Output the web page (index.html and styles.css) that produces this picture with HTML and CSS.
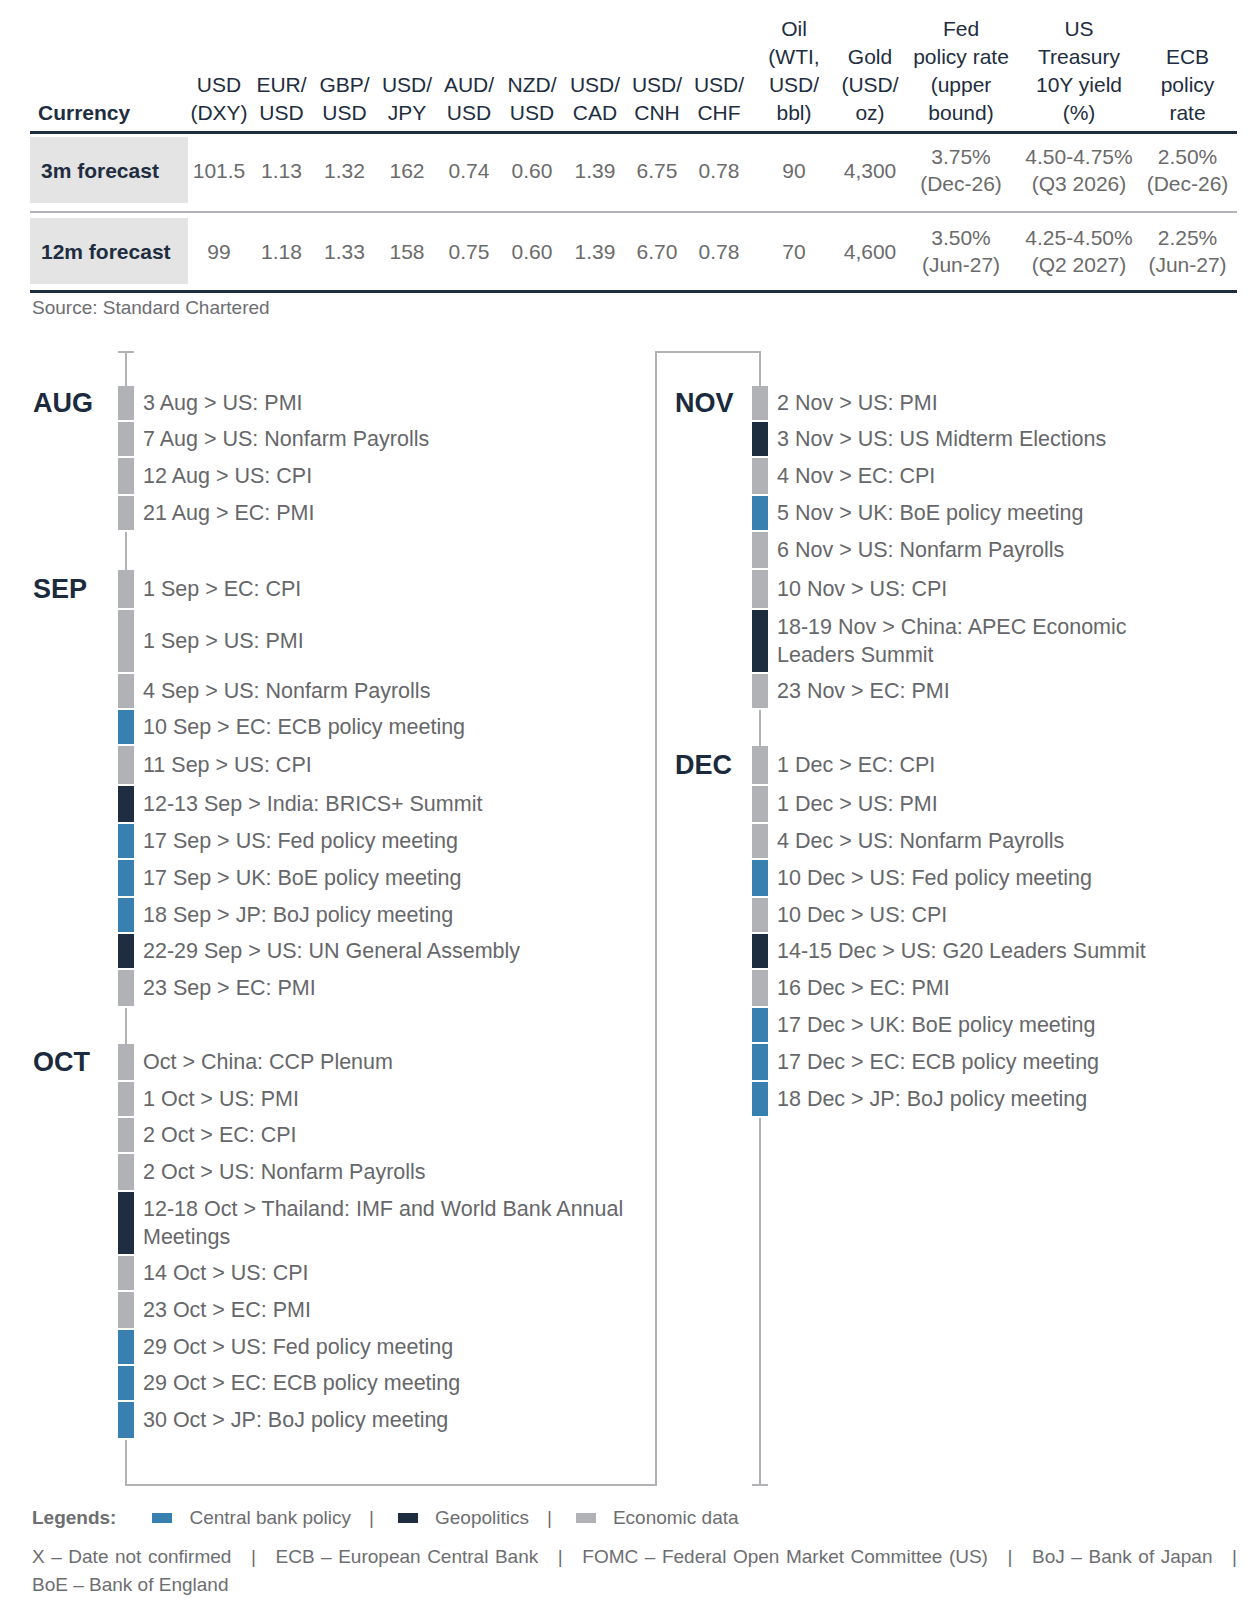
FILE: index.html
```html
<!DOCTYPE html>
<html lang="en">
<head>
<meta charset="utf-8">
<title>FX forecasts and event calendar</title>
<link rel="stylesheet" href="styles.css">
</head>
<body>
<div class="page">
  <table class="fx">
    <colgroup>
      <col class="w158"><col class="w62"><col class="w63"><col class="w63"><col class="w62"><col class="w62"><col class="w64"><col class="w62"><col class="w62"><col class="w62"><col class="w88"><col class="w64"><col class="w118"><col class="w118"><col class="w99">
    </colgroup>
    <thead>
      <tr>
        <th class="cur">Currency</th>
        <th>USD<br>(DXY)</th>
        <th>EUR/<br>USD</th>
        <th>GBP/<br>USD</th>
        <th>USD/<br>JPY</th>
        <th>AUD/<br>USD</th>
        <th>NZD/<br>USD</th>
        <th>USD/<br>CAD</th>
        <th>USD/<br>CNH</th>
        <th>USD/<br>CHF</th>
        <th>Oil<br>(WTI,<br>USD/<br>bbl)</th>
        <th>Gold<br>(USD/<br>oz)</th>
        <th>Fed<br>policy rate<br>(upper<br>bound)</th>
        <th>US<br>Treasury<br>10Y yield<br>(%)</th>
        <th>ECB<br>policy<br>rate</th>
      </tr>
    </thead>
    <tbody>
      <tr class="r1">
        <td class="lab"><div class="lab-box">3m forecast</div></td>
        <td>101.5</td><td>1.13</td><td>1.32</td><td>162</td><td>0.74</td><td>0.60</td><td>1.39</td><td>6.75</td><td>0.78</td><td>90</td><td>4,300</td>
        <td>3.75%<br>(Dec-26)</td><td>4.50-4.75%<br>(Q3 2026)</td><td>2.50%<br>(Dec-26)</td>
      </tr>
      <tr class="r2">
        <td class="lab"><div class="lab-box">12m forecast</div></td>
        <td>99</td><td>1.18</td><td>1.33</td><td>158</td><td>0.75</td><td>0.60</td><td>1.39</td><td>6.70</td><td>0.78</td><td>70</td><td>4,600</td>
        <td>3.50%<br>(Jun-27)</td><td>4.25-4.50%<br>(Q2 2027)</td><td>2.25%<br>(Jun-27)</td>
      </tr>
    </tbody>
  </table>
  <p class="src">Source: Standard Chartered</p>

  <div class="cal">
    <!-- row 0 -->
    <div class="mon"></div><div class="cap-top"></div><div class="txt l"></div>
    <div class="corner"></div><div class="corner-bar"></div><div class="txt r"></div>
    <!-- rows -->
    <div class="mon">AUG</div><div class="bar eco"></div><div class="txt l">3 Aug &gt; US: PMI</div>
    <div class="mon r">NOV</div><div class="bar eco"></div><div class="txt r">2 Nov &gt; US: PMI</div>

    <div class="mon"></div><div class="bar eco"></div><div class="txt l">7 Aug &gt; US: Nonfarm Payrolls</div>
    <div class="mon r"></div><div class="bar geo"></div><div class="txt r">3 Nov &gt; US: US Midterm Elections</div>

    <div class="mon"></div><div class="bar eco"></div><div class="txt l">12 Aug &gt; US: CPI</div>
    <div class="mon r"></div><div class="bar eco"></div><div class="txt r">4 Nov &gt; EC: CPI</div>

    <div class="mon"></div><div class="bar eco"></div><div class="txt l">21 Aug &gt; EC: PMI</div>
    <div class="mon r"></div><div class="bar cb"></div><div class="txt r">5 Nov &gt; UK: BoE policy meeting</div>

    <div class="mon"></div><div class="line"></div><div class="txt l"></div>
    <div class="mon r"></div><div class="bar eco"></div><div class="txt r">6 Nov &gt; US: Nonfarm Payrolls</div>

    <div class="mon">SEP</div><div class="bar eco"></div><div class="txt l">1 Sep &gt; EC: CPI</div>
    <div class="mon r"></div><div class="bar eco"></div><div class="txt r">10 Nov &gt; US: CPI</div>

    <div class="mon"></div><div class="bar eco"></div><div class="txt l">1 Sep &gt; US: PMI</div>
    <div class="mon r"></div><div class="bar geo"></div><div class="txt r">18-19 Nov &gt; China: APEC Economic Leaders Summit</div>

    <div class="mon"></div><div class="bar eco"></div><div class="txt l">4 Sep &gt; US: Nonfarm Payrolls</div>
    <div class="mon r"></div><div class="bar eco"></div><div class="txt r">23 Nov &gt; EC: PMI</div>

    <div class="mon"></div><div class="bar cb"></div><div class="txt l">10 Sep &gt; EC: ECB policy meeting</div>
    <div class="mon r"></div><div class="line"></div><div class="txt r"></div>

    <div class="mon"></div><div class="bar eco"></div><div class="txt l">11 Sep &gt; US: CPI</div>
    <div class="mon r">DEC</div><div class="bar eco"></div><div class="txt r">1 Dec &gt; EC: CPI</div>

    <div class="mon"></div><div class="bar geo"></div><div class="txt l">12-13 Sep &gt; India: BRICS+ Summit</div>
    <div class="mon r"></div><div class="bar eco"></div><div class="txt r">1 Dec &gt; US: PMI</div>

    <div class="mon"></div><div class="bar cb"></div><div class="txt l">17 Sep &gt; US: Fed policy meeting</div>
    <div class="mon r"></div><div class="bar eco"></div><div class="txt r">4 Dec &gt; US: Nonfarm Payrolls</div>

    <div class="mon"></div><div class="bar cb"></div><div class="txt l">17 Sep &gt; UK: BoE policy meeting</div>
    <div class="mon r"></div><div class="bar cb"></div><div class="txt r">10 Dec &gt; US: Fed policy meeting</div>

    <div class="mon"></div><div class="bar cb"></div><div class="txt l">18 Sep &gt; JP: BoJ policy meeting</div>
    <div class="mon r"></div><div class="bar eco"></div><div class="txt r">10 Dec &gt; US: CPI</div>

    <div class="mon"></div><div class="bar geo"></div><div class="txt l">22-29 Sep &gt; US: UN General Assembly</div>
    <div class="mon r"></div><div class="bar geo"></div><div class="txt r">14-15 Dec &gt; US: G20 Leaders Summit</div>

    <div class="mon"></div><div class="bar eco"></div><div class="txt l">23 Sep &gt; EC: PMI</div>
    <div class="mon r"></div><div class="bar eco"></div><div class="txt r">16 Dec &gt; EC: PMI</div>

    <div class="mon"></div><div class="line"></div><div class="txt l"></div>
    <div class="mon r"></div><div class="bar cb"></div><div class="txt r">17 Dec &gt; UK: BoE policy meeting</div>

    <div class="mon">OCT</div><div class="bar eco"></div><div class="txt l">Oct &gt; China: CCP Plenum</div>
    <div class="mon r"></div><div class="bar cb"></div><div class="txt r">17 Dec &gt; EC: ECB policy meeting</div>

    <div class="mon"></div><div class="bar eco"></div><div class="txt l">1 Oct &gt; US: PMI</div>
    <div class="mon r"></div><div class="bar cb"></div><div class="txt r">18 Dec &gt; JP: BoJ policy meeting</div>

    <div class="mon"></div><div class="bar eco"></div><div class="txt l">2 Oct &gt; EC: CPI</div>
    <div class="mon r"></div><div class="line"></div><div class="txt r"></div>

    <div class="mon"></div><div class="bar eco"></div><div class="txt l">2 Oct &gt; US: Nonfarm Payrolls</div>
    <div class="mon r"></div><div class="line"></div><div class="txt r"></div>

    <div class="mon"></div><div class="bar geo"></div><div class="txt l">12-18 Oct &gt; Thailand: IMF and World Bank Annual Meetings</div>
    <div class="mon r"></div><div class="line"></div><div class="txt r"></div>

    <div class="mon"></div><div class="bar eco"></div><div class="txt l">14 Oct &gt; US: CPI</div>
    <div class="mon r"></div><div class="line"></div><div class="txt r"></div>

    <div class="mon"></div><div class="bar eco"></div><div class="txt l">23 Oct &gt; EC: PMI</div>
    <div class="mon r"></div><div class="line"></div><div class="txt r"></div>

    <div class="mon"></div><div class="bar cb"></div><div class="txt l">29 Oct &gt; US: Fed policy meeting</div>
    <div class="mon r"></div><div class="line"></div><div class="txt r"></div>

    <div class="mon"></div><div class="bar cb"></div><div class="txt l">29 Oct &gt; EC: ECB policy meeting</div>
    <div class="mon r"></div><div class="line"></div><div class="txt r"></div>

    <div class="mon"></div><div class="bar cb"></div><div class="txt l">30 Oct &gt; JP: BoJ policy meeting</div>
    <div class="mon r"></div><div class="line"></div><div class="txt r"></div>

    <!-- end row -->
    <div class="mon end"></div><div class="end-left"></div><div class="txt l end-box"></div>
    <div class="mon r end"></div><div class="end-right"></div><div class="txt r end"></div>
  </div>

  <div class="legend">
    <b class="lg-title">Legends:</b>
    <span class="sw cb"></span><span class="lg-text">Central bank policy</span><span class="sep">|</span>
    <span class="sw geo"></span><span class="lg-text">Geopolitics</span><span class="sep">|</span>
    <span class="sw eco"></span><span class="lg-text">Economic data</span>
  </div>

  <div class="notes">
    <p class="note-line">X – Date not confirmed &nbsp; | &nbsp; ECB – European Central Bank &nbsp; | &nbsp; FOMC – Federal Open Market Committee (US) &nbsp; | &nbsp; BoJ – Bank of Japan &nbsp; |</p>
    <p class="note-last">BoE – Bank of England</p>
  </div>
</div>
</body>
</html>
```

FILE: styles.css
```css
* { box-sizing: border-box; }

html, body {
  margin: 0;
  background: #ffffff;
}

body {
  font-family: "Liberation Sans", Arial, Helvetica, sans-serif;
  color: #6b6b6e;
}

.page {
  width: 1252px;
  padding: 15px 15px 0 30px;
}

/* ---------- forecast table ---------- */
.fx {
  width: 1207px;
  border-collapse: collapse;
  table-layout: fixed;
  font-size: 21px;
  line-height: 28px;
}

.w158 { width: 158px; }
.w62 { width: 62px; }
.w63 { width: 63px; }
.w64 { width: 64px; }
.w88 { width: 88px; }
.w99 { width: 99px; }
.w118 { width: 118px; }

.fx th {
  font-weight: normal;
  color: #1e2d40;
  text-align: center;
  vertical-align: bottom;
  padding: 0 0 4px;
  border-bottom: 3px solid #1e2d40;
  white-space: nowrap;
}

.fx th.cur {
  font-weight: bold;
  text-align: left;
  padding-left: 8px;
}

.fx td {
  color: #6b6b6b;
  text-align: center;
  vertical-align: middle;
  line-height: 27px;
  white-space: nowrap;
}

.fx tr.r1 td {
  padding: 3px 0 8px;
  border-bottom: 2px solid #b4b4b8;
}

.fx tr.r2 td {
  padding: 5px 0 6px;
  border-bottom: 3px solid #1e2d40;
}

.fx td.lab {
  text-align: left;
  padding-left: 2px;
}

.lab-box {
  height: 66px;
  display: flex;
  align-items: center;
  padding-left: 11px;
  background: #e4e4e4;
  font-weight: bold;
  color: #1e2d40;
}

.src {
  margin: 3px 0 0 2px;
  font-size: 19px;
  line-height: 24px;
  color: #6d6e71;
}

/* ---------- calendar ---------- */
.cal {
  margin-top: 31px;
  display: grid;
  grid-template-columns: 88px 16px 523px 95px 16px 420px;
  grid-template-rows:
    35px
    36px 36px 38px 36px 38px 40px 64px 36px 36px 40px
    38px 36px 38px 36px 36px 38px 36px 38px 36px 36px
    38px 64px 36px 38px 36px 36px 38px
    46px;
}

.mon {
  display: flex;
  align-items: center;
  padding: 0 0 2px 3px;
  font-size: 27px;
  font-weight: bold;
  color: #1b2a3d;
}

.mon.r { padding-left: 18px; }

.bar { margin-bottom: 2px; }
.eco { background: #b1b2b6; }
.cb { background: #3880b0; }
.geo { background: #1e2d40; }

.line {
  background: linear-gradient(90deg, transparent 7px, #b1b2b6 7px, #b1b2b6 9px, transparent 9px);
}

.cap-top {
  background:
    linear-gradient(#b1b2b6, #b1b2b6) left top / 100% 2px no-repeat,
    linear-gradient(90deg, transparent 7px, #b1b2b6 7px, #b1b2b6 9px, transparent 9px);
}

.corner {
  border-top: 2px solid #b1b2b6;
}

.corner-bar {
  background:
    linear-gradient(#b1b2b6, #b1b2b6) left top / 9px 2px no-repeat,
    linear-gradient(90deg, transparent 7px, #b1b2b6 7px, #b1b2b6 9px, transparent 9px);
}

.end-left {
  background:
    linear-gradient(#b1b2b6, #b1b2b6) right bottom / 9px 2px no-repeat,
    linear-gradient(90deg, transparent 7px, #b1b2b6 7px, #b1b2b6 9px, transparent 9px);
}

.end-right {
  background:
    linear-gradient(#b1b2b6, #b1b2b6) left bottom / 100% 2px no-repeat,
    linear-gradient(90deg, transparent 7px, #b1b2b6 7px, #b1b2b6 9px, transparent 9px);
}

.txt {
  display: flex;
  align-items: center;
  padding: 3px 0 5px 9px;
  font-size: 21.5px;
  line-height: 28px;
  color: #66676a;
}

.txt.l {
  border-right: 2px solid #b1b2b6;
  padding-right: 8px;
}

.end-box {
  border-bottom: 2px solid #b1b2b6;
}

/* ---------- legend ---------- */
.legend {
  margin-top: 20px;
  display: flex;
  align-items: center;
  padding-left: 2px;
  font-size: 19px;
  line-height: 24px;
  color: #6d6e71;
}

.lg-title {
  font-weight: bold;
  margin-right: 36px;
}

.sw {
  width: 20px;
  height: 10px;
  margin-right: 17px;
}

.sep {
  margin: 0 24px 0 18px;
}

.notes {
  margin-top: 13px;
  padding-left: 2px;
  width: 1207px;
  font-size: 19px;
  line-height: 28px;
  color: #6d6e71;
}

.notes p { margin: 0; }

.note-line {
  text-align: justify;
  text-align-last: justify;
  width: 1205px;
}
```
